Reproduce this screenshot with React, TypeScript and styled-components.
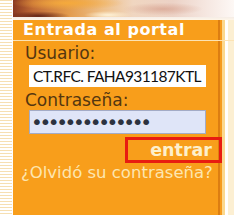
import styled, { createGlobalStyle } from "styled-components";

const GlobalStyle = createGlobalStyle`
  html, body {
    margin: 0;
    padding: 0;
    background: #ffffff;
  }
`;

const Page = styled.div`
  display: flex;
  width: 234px;
  height: 215px;
  overflow: hidden;
`;

const Stripes = styled.div`
  width: 12px;
  margin-right: 1px;
  flex-shrink: 0;
  background: repeating-linear-gradient(
    to bottom,
    #f6dfb2 0px,
    #f6dfb2 1.5px,
    #ffffff 1.5px,
    #ffffff 3px
  );
`;

const Main = styled.div`
  flex: 1;
  display: flex;
  flex-direction: column;
`;

// blurred food photo strip along the top
const Photo = styled.div`
  height: 17px;
  flex-shrink: 0;
  background:
    radial-gradient(ellipse 40px 6px at 25px 16px, rgba(90, 30, 20, 0.9), rgba(90, 30, 20, 0) 80%),
    radial-gradient(ellipse 30px 5px at 95px 15px, rgba(255, 245, 220, 0.95), rgba(255, 245, 220, 0) 80%),
    radial-gradient(ellipse 70px 9px at 55px 3px, rgba(245, 170, 60, 1), rgba(245, 170, 60, 0) 80%),
    radial-gradient(ellipse 50px 8px at 150px 9px, rgba(210, 150, 130, 0.6), rgba(210, 150, 130, 0) 80%),
    linear-gradient(to right, #8a3a22 0px, #c06a35 20px, #e29a4c 55px, #eec08a 90px, #f0d6c0 120px, #ecd2c6 160px, #f6e8e2 195px, #fdf8f5 221px);
`;

const PhotoEdge = styled.div`
  height: 3px;
  flex-shrink: 0;
  background: linear-gradient(to bottom, #f4ece6, #fff6e8);
`;

const Row = styled.div<{ $grow?: boolean; $line?: boolean }>`
  display: flex;
  flex: ${(p) => (p.$grow ? 1 : "none")};
  border-bottom: ${(p) => (p.$line ? "1px solid #fce3b4" : "none")};
`;

const Panel = styled.div`
  width: 205px;
  flex-shrink: 0;
  background: #f89e1b;
  display: flex;
  flex-direction: column;
`;

const Edge = styled.div`
  flex: 1;
  background: linear-gradient(
    to right,
    #dc7e12 0px,
    #dc7e12 2px,
    #f59b1e 2px,
    #f59b1e 4px,
    #fbd88e 4px,
    #fbd88e 7px,
    #ffffff 7px,
    #ffffff 10px,
    #fcefd2 10px
  );
`;

const Title = styled.div`
  font-family: "DejaVu Sans", Verdana, sans-serif;
  font-weight: bold;
  font-size: 16px;
  color: #ffffff;
  padding-left: 10px;
  height: 20px;
  line-height: 20px;
  letter-spacing: 0.55px;
  white-space: nowrap;
`;

const Label = styled.div<{ $gap: number }>`
  font-family: "DejaVu Sans", Tahoma, sans-serif;
  font-size: 17px;
  color: #543610;
  padding-left: 12px;
  margin-top: ${(p) => p.$gap}px;
  height: 20px;
  line-height: 20px;
  white-space: nowrap;
`;

const Field = styled.input<{ $secret?: boolean }>`
  box-sizing: border-box;
  margin: ${(p) => (p.$secret ? "0" : "2px")} 0 0 16px;
  width: 177px;
  height: ${(p) => (p.$secret ? 24 : 22)}px;
  padding: 0 0 0 ${(p) => (p.$secret ? 1 : 3)}px;
  outline: none;
  border-radius: 0;
  background: ${(p) => (p.$secret ? "#dfe5f8" : "#ffffff")};
  border: 1px solid ${(p) => (p.$secret ? "#a3abc6" : "#ffffff")};
  color: ${(p) => (p.$secret ? "#2c3240" : "#111111")};
  font-family: ${(p) => (p.$secret ? '"DejaVu Sans", sans-serif' : '"Lato", "Open Sans", sans-serif')};
  font-size: ${(p) => (p.$secret ? 20 : 15.5)}px;
  letter-spacing: ${(p) => (p.$secret ? "-3.4px" : "-0.6px")};
`;

const ActionBar = styled.div`
  display: flex;
  justify-content: flex-end;
  margin-top: 3px;
  margin-right: -4px;
`;

const Submit = styled.button`
  position: relative;
  box-sizing: border-box;
  width: 97px;
  height: 26px;
  border: 3px solid #e81c10;
  background: transparent;
  padding: 0 7px 0 0;
  text-align: right;
  font-family: "DejaVu Sans", Verdana, sans-serif;
  font-weight: bold;
  font-size: 17.5px;
  line-height: 18px;
  color: #fdf0cc;
  cursor: pointer;
`;

const Forgot = styled.a`
  display: block;
  margin-top: 1px;
  font-family: "DejaVu Sans", Verdana, sans-serif;
  font-size: 16.5px;
  color: #fde6b0;
  padding-left: 8px;
  text-decoration: none;
  line-height: 18px;
  white-space: nowrap;
`;

export default function App() {
  return (
    <>
      <GlobalStyle />
      <Page>
        <Stripes />
        <Main>
          <Photo />
          <PhotoEdge />
          <Row $line>
            <Panel>
              <Title>Entrada al portal</Title>
            </Panel>
            <Edge />
          </Row>
          <Row $grow>
            <Panel>
              <Label $gap={2}>Usuario:</Label>
              <Field readOnly value="CT.RFC. FAHA931187KTL" />
              <Label $gap={3}>Contraseña:</Label>
              <Field $secret readOnly type="password" value="abcdefghijklmn" />
              <ActionBar>
                <Submit>entrar</Submit>
              </ActionBar>
              <Forgot href="#">¿Olvidó su contraseña?</Forgot>
            </Panel>
            <Edge />
          </Row>
        </Main>
      </Page>
    </>
  );
}
